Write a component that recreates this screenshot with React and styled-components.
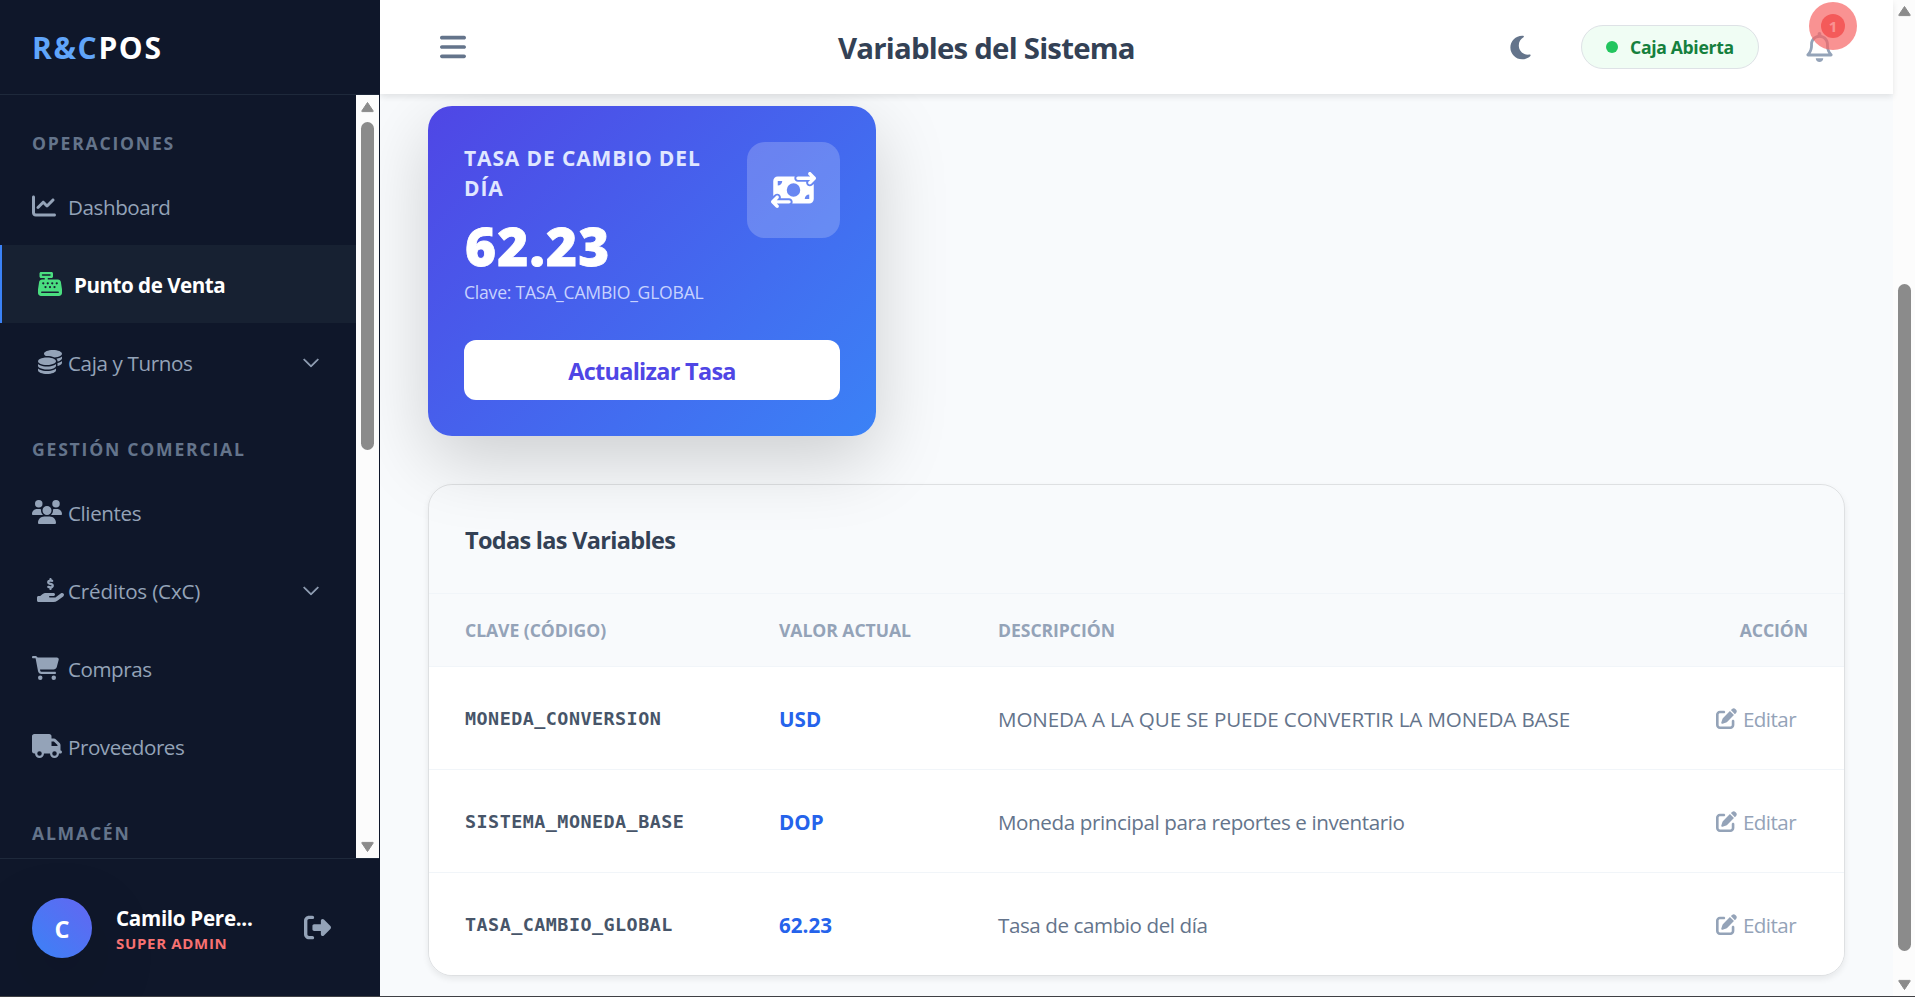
import React from 'react'
import { createGlobalStyle, styled } from 'styled-components'
import {
  FaBars,
  FaCartShopping,
  FaCashRegister,
  FaChartLine,
  FaCoins,
  FaHandHoldingDollar,
  FaMoneyBillTransfer,
  FaMoon,
  FaPenToSquare,
  FaRegBell,
  FaRightFromBracket,
  FaTruck,
  FaUsers,
} from 'react-icons/fa6'
import { BsChevronDown } from 'react-icons/bs'

const menuSections = [
  {
    title: 'Operaciones',
    items: [
      { id: 1, title: 'Dashboard', icon: <FaChartLine />, track: -0.42 },
      { id: 2, title: 'Punto de Venta', icon: <FaCashRegister />, track: -0.49, active: true },
      { id: 3, title: 'Caja y Turnos', icon: <FaCoins />, track: -0.38, submenu: true },
    ],
  },
  {
    title: 'Gestión Comercial',
    items: [
      { id: 4, title: 'Clientes', icon: <FaUsers />, iconWidth: 30, track: -0.4 },
      { id: 5, title: 'Créditos (CxC)', icon: <FaHandHoldingDollar />, iconWidth: 27, track: -0.16, submenu: true },
      { id: 6, title: 'Compras', icon: <FaCartShopping />, iconWidth: 27, track: -0.45 },
      { id: 7, title: 'Proveedores', icon: <FaTruck />, iconWidth: 30, track: -0.46 },
    ],
  },
  { title: 'Almacén', items: [] },
]

const variables = [
  { clave: 'MONEDA_CONVERSION', valor: 'USD', descripcion: 'MONEDA A LA QUE SE PUEDE CONVERTIR LA MONEDA BASE', track: -0.12 },
  { clave: 'SISTEMA_MONEDA_BASE', valor: 'DOP', descripcion: 'Moneda principal para reportes e inventario', track: -0.4 },
  { clave: 'TASA_CAMBIO_GLOBAL', valor: '62.23', descripcion: 'Tasa de cambio del día', track: -0.42 },
]

function Scrollbar({ size, start, length }) {
  return (
    <ScrollTrack $size={size}>
      <Arrow viewBox='0 0 15 12'>
        <path d='M7.5 1.5 L13.2 10 Q13.4 10.6 12.8 10.6 H2.2 Q1.6 10.6 1.8 10 Z' />
      </Arrow>
      <ScrollThumb $start={start} $length={length} />
      <Arrow viewBox='0 0 15 12' $down>
        <path d='M7.5 1.5 L13.2 10 Q13.4 10.6 12.8 10.6 H2.2 Q1.6 10.6 1.8 10 Z' />
      </Arrow>
    </ScrollTrack>
  )
}

function Sidebar() {
  return (
    <SidebarStyled>
      <Brand>
        <span>R&amp;C</span>POS
      </Brand>
      <NavWrap>
        <Nav>
          {menuSections.map((section) => (
            <React.Fragment key={section.title}>
              <SectionTitle>{section.title}</SectionTitle>
              {section.items.map((item) => (
                <NavItem key={item.id} $active={item.active} $track={item.track}>
                  <NavIcon $center={item.submenu} $active={item.active} $width={item.iconWidth}>
                    {item.icon}
                  </NavIcon>
                  <span>{item.title}</span>
                  {item.submenu && <BsChevronDown className='chevron' />}
                </NavItem>
              ))}
            </React.Fragment>
          ))}
        </Nav>
        <Scrollbar size={23} start={9} length={328} />
      </NavWrap>
      <UserBox>
        <Avatar>C</Avatar>
        <UserInfo>
          <UserName>Camilo Pere...</UserName>
          <UserRole>SUPER ADMIN</UserRole>
        </UserInfo>
        <FaRightFromBracket />
      </UserBox>
    </SidebarStyled>
  )
}

function Header() {
  return (
    <HeaderStyled>
      <MenuButton><FaBars /></MenuButton>
      <PageTitle>Variables del Sistema</PageTitle>
      <HeaderActions>
        <FaMoon className='moon' />
        <StatusPill>
          <i />
          Caja Abierta
        </StatusPill>
        <BellButton>
          <FaRegBell />
          <Badge>1</Badge>
        </BellButton>
      </HeaderActions>
    </HeaderStyled>
  )
}

function RateCard() {
  return (
    <RateCardStyled>
      <RateTop>
        <div>
          <RateLabel>TASA DE CAMBIO DEL DÍA</RateLabel>
          <RateValue>62.23</RateValue>
          <RateKey>Clave: TASA_CAMBIO_GLOBAL</RateKey>
        </div>
        <RateIcon><FaMoneyBillTransfer /></RateIcon>
      </RateTop>
      <RateButton>Actualizar Tasa</RateButton>
    </RateCardStyled>
  )
}

function VariablesTable() {
  return (
    <TableCard>
      <TableTitle>Todas las Variables</TableTitle>
      <Table>
        <colgroup>
          <col width='314' />
          <col width='219' />
          <col />
          <col width='190' />
        </colgroup>
        <thead>
          <tr>
            <Th>Clave (Código)</Th>
            <Th>Valor Actual</Th>
            <Th>Descripción</Th>
            <Th $right>Acción</Th>
          </tr>
        </thead>
        <tbody>
          {variables.map((v) => (
            <tr key={v.clave}>
              <Td><Code>{v.clave}</Code></Td>
              <Td><Value>{v.valor}</Value></Td>
              <Td $track={v.track}>{v.descripcion}</Td>
              <Td>
                <EditButton>
                  <FaPenToSquare /> Editar
                </EditButton>
              </Td>
            </tr>
          ))}
        </tbody>
      </Table>
    </TableCard>
  )
}

export default function App() {
  return (
    <>
      <GlobalStyle />
      <Layout>
        <Sidebar />
        <Main>
          <Header />
          <Content>
            <RateCard />
            <VariablesTable />
          </Content>
        </Main>
        <Scrollbar size={22} start={267} length={667} />
      </Layout>
    </>
  )
}

const GlobalStyle = createGlobalStyle`
  * {
    box-sizing: border-box;
  }
  body {
    margin: 0;
    overflow: hidden;
    background: #f8fafc;
    font-family: 'Open Sans', 'Noto Sans', sans-serif;
    font-size: 20.6px;
    color: #334155;
  }
  button {
    font-family: inherit;
    border: 0;
    background: none;
    padding: 0;
  }
  svg {
    display: block;
    flex-shrink: 0;
  }
`

const Layout = styled.div`
  display: flex;
  height: 997px;
  border-bottom: 1px solid #3f4044;
  > div:last-child {
    padding-top: 5px;
  }
`

const ScrollTrack = styled.div`
  width: ${(p) => p.$size}px;
  flex-shrink: 0;
  display: flex;
  flex-direction: column;
  align-items: center;
  padding: 6px 0 5px;
  background: #fcfcfc;
`

const Arrow = styled.svg`
  width: 15px;
  height: 12px;
  margin-top: ${(p) => (p.$down ? 'auto' : 0)};
  transform: ${(p) => (p.$down ? 'rotate(180deg)' : 'none')};
  path {
    fill: #8b8b8b;
    stroke: #8b8b8b;
    stroke-linejoin: round;
  }
`

const ScrollThumb = styled.div`
  width: 13px;
  height: ${(p) => p.$length}px;
  margin-top: ${(p) => p.$start}px;
  border-radius: 7px;
  background: #8b8b8b;
`

const SidebarStyled = styled.aside`
  width: 380px;
  flex-shrink: 0;
  display: flex;
  flex-direction: column;
  background: #0f172a;
  border-right: 1px solid #0f172a;
  position: relative;
  z-index: 2;
`

const Brand = styled.div`
  height: 95px;
  padding: 1px 32px 0;
  display: flex;
  align-items: center;
  border-bottom: 1px solid #1e293b;
  font-size: 30px;
  font-weight: 700;
  letter-spacing: 1.65px;
  color: #fff;
  span {
    color: #60a5fa;
  }
`

const NavWrap = styled.div`
  flex: 1;
  min-height: 0;
  display: flex;
`

const Nav = styled.nav`
  flex: 1;
  overflow: hidden;
`

const SectionTitle = styled.h6`
  margin: 0;
  height: 72px;
  padding: 36px 32px 0;
  font-size: 17.6px;
  line-height: 24px;
  font-weight: 700;
  letter-spacing: 1.77px;
  text-transform: uppercase;
  color: #64748b;
`

const NavItem = styled.div`
  height: 78px;
  display: flex;
  align-items: center;
  padding: 2px 36px 0 ${(p) => (p.$active ? 36 : 32)}px;
  border-left: ${(p) => (p.$active ? '2px solid #3b82f6' : 0)};
  background: ${(p) => (p.$active ? '#172132' : 'transparent')};
  color: ${(p) => (p.$active ? '#fff' : '#94a3b8')};
  font-weight: ${(p) => (p.$active ? 700 : 520)};
  letter-spacing: ${(p) => p.$track}px;
  .chevron {
    margin-left: auto;
    font-size: 18px;
    stroke: currentColor;
    stroke-width: 0.8;
  }
`

const NavIcon = styled.span`
  width: 36px;
  display: flex;
  justify-content: ${(p) => (p.$center ? 'center' : 'flex-start')};
  margin-top: -3px;
  color: ${(p) => (p.$active ? '#4ade80' : '#94a3b8')};
  svg {
    width: ${(p) => p.$width || 24}px;
    height: 24px;
  }
`

const UserBox = styled.div`
  height: 138px;
  padding: 0 48px 0 32px;
  display: flex;
  align-items: center;
  border-top: 1px solid #1e293b;
  > svg {
    margin-left: auto;
    font-size: 27px;
    color: #94a3b8;
  }
`

const Avatar = styled.div`
  width: 60px;
  height: 60px;
  display: grid;
  place-items: center;
  padding-top: 3px;
  border-radius: 50%;
  background: linear-gradient(45deg, #3b82f6, #6366f1);
  box-shadow: 0 24px 72px rgba(0, 0, 0, 0.175);
  color: #fff;
  font-size: 23.5px;
  font-weight: 700;
`

const UserInfo = styled.div`
  margin-left: 24px;
  padding-top: 2px;
`

const UserName = styled.div`
  font-weight: 700;
  line-height: 28px;
  letter-spacing: -0.3px;
  color: #fff;
`

const UserRole = styled.div`
  font-size: 15px;
  font-weight: 700;
  line-height: 22px;
  letter-spacing: 0.68px;
  color: #f87171;
`

const Main = styled.main`
  flex: 1;
  min-width: 0;
  display: flex;
  flex-direction: column;
`

const HeaderStyled = styled.header`
  height: 94px;
  flex-shrink: 0;
  padding: 0 48px 0 60px;
  display: flex;
  align-items: center;
  justify-content: space-between;
  background: #fff;
  box-shadow: 0 3px 6px rgba(0, 0, 0, 0.09);
  position: relative;
  z-index: 1;
`

const MenuButton = styled.button`
  width: 398px;
  font-size: 30px;
  color: #64748b;
  svg {
    width: 26px;
    height: 30px;
  }
`

const PageTitle = styled.h1`
  margin: 0;
  padding-top: 2px;
  width: 300px;
  white-space: nowrap;
  font-size: 29.4px;
  font-weight: 700;
  letter-spacing: -0.78px;
  color: #334155;
`

const HeaderActions = styled.div`
  flex: 1;
  display: flex;
  align-items: center;
  justify-content: flex-end;
  .moon {
    width: 21px;
    height: 27px;
    margin: 0 50px 0 0;
    color: #64748b;
  }
`

const StatusPill = styled.div`
  width: 178px;
  height: 44px;
  padding: 0 0 0 24px;
  display: flex;
  align-items: center;
  gap: 12px;
  border: 1px solid #dee2e6;
  border-radius: 22px;
  background: #f0fdf4;
  color: #15803d;
  font-size: 17.6px;
  font-weight: 700;
  letter-spacing: -0.33px;
  i {
    width: 12px;
    height: 12px;
    border-radius: 50%;
    background: #22c55e;
  }
`

const BellButton = styled.button`
  width: 26px;
  margin-left: 47px;
  margin-right: 13px;
  position: relative;
  font-size: 30px;
  color: #94a3b8;
  svg {
    width: 27px;
    height: 30px;
  }
`

const Badge = styled.span`
  position: absolute;
  top: -18px;
  left: 15px;
  width: 24px;
  height: 24px;
  line-height: 24px;
  border-radius: 50%;
  background: #ef4444;
  color: #fff;
  font-size: 15px;
  font-weight: 700;
  &::after {
    content: '';
    position: absolute;
    inset: -12px;
    border-radius: 50%;
    background: rgba(246, 100, 100, 0.7);
  }
`

const Content = styled.div`
  flex: 1;
  min-height: 0;
  padding: 12px 48px 0;
  overflow: hidden;
  background: #f8fafc;
`

const RateCardStyled = styled.section`
  width: 448px;
  height: 330px;
  padding: 36px;
  display: flex;
  flex-direction: column;
  justify-content: space-between;
  border-radius: 24px;
  background: linear-gradient(135deg, #4f46e5, #3b82f6);
  box-shadow: 0 24px 72px rgba(0, 0, 0, 0.175);
`

const RateTop = styled.div`
  display: flex;
  justify-content: space-between;
  align-items: flex-start;
`

const RateLabel = styled.h6`
  margin: 0;
  padding-top: 1px;
  width: 260px;
  font-size: 21px;
  font-weight: 700;
  line-height: 30px;
  letter-spacing: 0.87px;
  color: #e0e7ff;
`

const RateValue = styled.div`
  margin-top: 11px;
  padding-left: 1px;
  font-size: 53px;
  font-weight: 800;
  line-height: 64px;
  letter-spacing: 1.2px;
  -webkit-text-stroke: 0.8px #fff;
  color: #fff;
`

const RateKey = styled.div`
  margin-top: 1px;
  font-size: 17.6px;
  line-height: 27px;
  letter-spacing: -0.24px;
  color: #c7d2fe;
`

const RateIcon = styled.div`
  width: 93px;
  height: 96px;
  display: grid;
  place-items: center;
  border-radius: 18px;
  background: rgba(255, 255, 255, 0.2);
  color: #fff;
  svg {
    width: 45px;
    height: 36px;
  }
`

const RateButton = styled.button`
  height: 60px;
  padding-top: 2px;
  border-radius: 12px;
  background: #fff;
  color: #4f46e5;
  font-size: 23.5px;
  font-weight: 700;
  letter-spacing: -0.73px;
`

const TableCard = styled.section`
  margin-top: 48px;
  height: 492px;
  border: 1px solid rgba(0, 0, 0, 0.1);
  border-radius: 24px;
  overflow: hidden;
  box-shadow: 0 3px 6px rgba(0, 0, 0, 0.075);
`

const TableTitle = styled.h5`
  margin: 0;
  height: 109px;
  padding: 2px 36px 0;
  display: flex;
  align-items: center;
  border-bottom: 1px solid #f1f5f9;
  font-size: 23.5px;
  font-weight: 700;
  letter-spacing: -0.69px;
  color: #334155;
`

const Table = styled.table`
  width: 100%;
  table-layout: fixed;
  border-collapse: separate;
  border-spacing: 0;
`

const Th = styled.th`
  height: 73px;
  padding: 0 36px 1px;
  text-align: ${(p) => (p.$right ? 'right' : 'left')};
  text-transform: uppercase;
  background: #f8fafc;
  border-bottom: 1px solid #f1f5f9;
  font-size: 17.6px;
  font-weight: 700;
  letter-spacing: -0.06px;
  color: #94a3b8;
`

const Td = styled.td`
  height: 103px;
  padding: 2px 36px 0;
  background: #fff;
  border-bottom: 1px solid #f1f5f9;
  white-space: nowrap;
  color: #64748b;
  letter-spacing: ${(p) => p.$track || 0}px;
`

const Code = styled.span`
  display: block;
  margin-top: -2px;
  font-family: 'DejaVu Sans Mono', monospace;
  font-size: 18.4px;
  font-weight: 700;
  letter-spacing: 0.47px;
  color: #475569;
`

const Value = styled.span`
  font-weight: 700;
  color: #2563eb;
`

const EditButton = styled.button`
  display: flex;
  align-items: center;
  gap: 6px;
  margin-left: auto;
  padding-right: 12px;
  font-size: 20.6px;
  letter-spacing: -0.57px;
  color: #94a3b8;
  svg {
    width: 21px;
    height: 21px;
    margin-top: -1px;
  }
`
